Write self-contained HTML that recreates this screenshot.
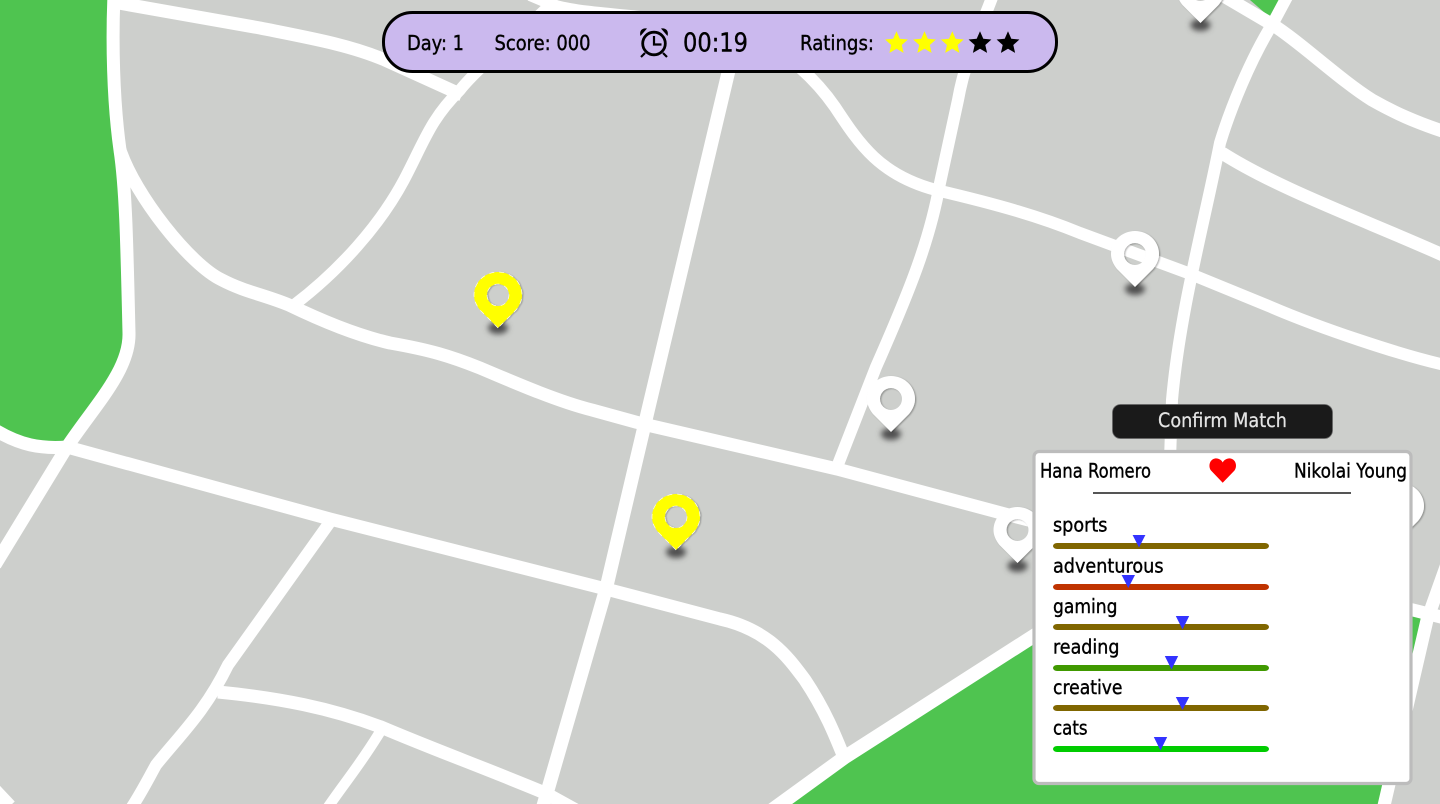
<!DOCTYPE html>
<html>
<head>
<meta charset="utf-8">
<style>
html,body{margin:0;padding:0;background:#cdcfcc;width:1440px;height:804px;overflow:hidden}
svg{display:block}
text{font-family:"DejaVu Sans","Liberation Sans",sans-serif;fill:#000;stroke:#000;stroke-width:.4px}
</style>
</head>
<body>
<svg width="1440" height="804" viewBox="0 0 1440 804" xmlns="http://www.w3.org/2000/svg">
<defs>
<filter id="b" x="-80%" y="-120%" width="260%" height="340%"><feGaussianBlur stdDeviation="3"/></filter>
<filter id="d" x="-20%" y="-20%" width="140%" height="140%"><feDropShadow dx="1.2" dy="0.8" stdDeviation="0.7" flood-color="#000" flood-opacity="0.3"/></filter>
<filter id="dy" x="-20%" y="-20%" width="140%" height="140%"><feDropShadow dx="1.4" dy="0.4" stdDeviation="0.4" flood-color="#000" flood-opacity="0.22"/></filter>
<path id="p" fill-rule="evenodd" d="M0,33 L-18,15 C-22,10 -24,5 -24,0 A24,23 0 0 1 24,0 C24,5 22,10 18,15 Z M-11,0 A11,11 0 1 0 11,0 A11,11 0 1 0 -11,0 Z"/>
<path id="py" fill-rule="evenodd" d="M0,33 L-18,15 C-22,10 -24,5 -24,0 A24,23 0 0 1 24,0 C24,5 22,10 18,15 Z M-11,0 A11,11 0 1 0 11,0 A11,11 0 1 0 -11,0 Z"/>
<polygon id="s" points="0,-12 3.3,-4.5 11.4,-3.7 5.3,1.8 7.1,9.7 0,5.6 -7.1,9.7 -5.3,1.8 -11.4,-3.7 -3.3,-4.5"/>
</defs>

<rect width="1440" height="804" fill="#cdcfcc"/>

<!-- parks -->
<g fill="#4fc450">
<path d="M0,0 L113,0 C111,40 112,100 120,150 C126,190 126,250 129,333 C130,370 100,400 67,447 C40,449 20,445 0,432 Z"/>
<path d="M770,810 L845,757 L1040,630 L1425,612 L1383,810 Z"/>
<path d="M1250,0 L1290,0 L1273,20 Z"/>
</g>

<!-- roads -->
<g fill="none" stroke="#fff" stroke-width="13" stroke-linejoin="round">
<path d="M114,-5 C112,40 113,100 120,150 C126,190 127,250 129,333 C130,370 95,405 67,447 L-5,565"/>
<path d="M-5,430 C20,445 40,449 67,447"/>
<path d="M120,150 C135,195 190,265 222,280 C245,292 265,295 289,305 C320,320 355,335 390,343 C430,350 450,356 480,368 C520,385 560,402 592,410 L643,424 L837,469 L1005,514 L1040,523"/>
<path d="M113,2 L260,28 C310,38 350,45 385,60 L462,95"/>
<path stroke-width="11.5" d="M294,305 C340,270 380,225 404,180 C425,140 430,120 460,90 C480,65 520,35 550,5"/>
<path stroke-width="12" d="M530,-5 L556,6 C600,18 700,15 760,40 C785,52 815,78 835,107 C860,145 880,175 936,190 C1000,205 1041,217 1080,233 L1188,273 L1271,307 C1320,328 1400,355 1445,365"/>
<path stroke-width="12" d="M993,-5 C980,30 965,60 958,100 L940,183 C930,240 910,290 876,367 L837,467"/>
<path stroke-width="12" d="M1288,-5 L1273,23 C1250,60 1230,110 1220,143 C1205,220 1180,310 1172,400 L1170,460"/>
<path stroke-width="13" d="M1222,-5 L1273,25 C1300,42 1340,80 1372,100 C1395,113 1415,122 1445,132"/>
<path stroke-width="13" d="M1222,153 C1280,190 1370,222 1445,256"/>
<path d="M67,447 L330,519 L606,589 L720,619 C770,630 790,660 805,680 C825,710 835,735 845,760"/>
<path stroke-width="13.5" d="M736,40 L650,402 L606,589 L542,810"/>
<path stroke-width="12" d="M330,522 L228,665 C205,712 180,735 156,765 C145,785 140,795 130,810"/>
<path stroke-width="13" d="M218,692 C280,698 330,708 381,727 C430,748 490,770 545,793 L585,815"/>
<path stroke-width="10.5" d="M380,732 C360,765 345,782 326,810"/>
<path d="M-5,790 L10,806"/>
<path stroke-width="14" d="M772,810 L845,757 L1040,632"/>
<path stroke-width="13" d="M1452,550 L1427,620 L1383,810"/>
<path stroke-width="13" d="M1405,608 L1445,618"/>
</g>

<!-- pin shadows -->
<g fill="#505050" filter="url(#b)">
<ellipse cx="1200.5" cy="25" rx="10" ry="6"/>
<ellipse cx="1135" cy="289" rx="10" ry="6"/>
<ellipse cx="891" cy="434" rx="10" ry="6"/>
<ellipse cx="1017.5" cy="566" rx="10" ry="6"/>
<ellipse cx="498" cy="328" rx="10" ry="6"/>
<ellipse cx="676" cy="552" rx="10" ry="6"/>
</g>

<!-- white pins -->
<g fill="#fff" filter="url(#d)">
<use href="#p" transform="translate(1200.5,-10)"/>
<use href="#p" transform="translate(1135,254)"/>
<use href="#p" transform="translate(891,399)"/>
<use href="#p" transform="translate(1017.5,530)"/>
<use href="#p" transform="translate(1400,506)"/>
</g>

<!-- yellow pins -->
<g fill="#ffff00" filter="url(#dy)" stroke="#fff" stroke-width="0.6" stroke-dasharray="5 5">
<use href="#py" transform="translate(498,295)"/>
<use href="#py" transform="translate(676,517)"/>
</g>

<!-- top bar -->
<rect x="383.5" y="12.5" width="673" height="59" rx="29" ry="29" fill="#cbb9ee" stroke="#000" stroke-width="3"/>
<text x="407" y="50" font-size="20.5" textLength="57" lengthAdjust="spacingAndGlyphs">Day: 1</text>
<text x="494.5" y="50" font-size="20.5" textLength="96" lengthAdjust="spacingAndGlyphs">Score: 000</text>
<text x="683" y="51.5" font-size="26" textLength="65" lengthAdjust="spacingAndGlyphs">00:19</text>
<text x="800" y="50" font-size="20.5" textLength="74" lengthAdjust="spacingAndGlyphs">Ratings:</text>

<!-- alarm icon -->
<g fill="none" stroke="#000" stroke-width="2.8">
<circle cx="654" cy="43.5" r="11.3"/>
<path stroke-width="2.2" d="M654,36 V44.5 H661.5"/>
<path stroke-width="2.2" d="M645,53 L641,57 M663,53 L667,57"/>
</g>
<path fill="#000" d="M640.5,36 C639,31 642,27.5 647,28.5 Z M667.5,36 C669,31 666,27.5 661,28.5 Z"/>

<!-- stars -->
<g fill="#ffff00">
<use href="#s" transform="translate(896.5,43.2)"/>
<use href="#s" transform="translate(924.5,43.2)"/>
<use href="#s" transform="translate(952.3,43.2)"/>
</g>
<g fill="#000">
<use href="#s" transform="translate(980,43.2)"/>
<use href="#s" transform="translate(1008,43.2)"/>
</g>

<!-- confirm button -->
<rect x="1112.5" y="404.5" width="220" height="34" rx="8" fill="#1a1a1a" stroke="#666" stroke-width="0.8"/>
<text x="1158" y="427" font-size="19.5" textLength="129" lengthAdjust="spacingAndGlyphs" style="fill:#e4e4e4;stroke:#e4e4e4;stroke-width:.25px">Confirm Match</text>

<!-- panel -->
<rect x="1034" y="451.5" width="377" height="332" rx="5" fill="#fff" stroke="#bcbcbc" stroke-width="3.2"/>
<text x="1040" y="477.3" font-size="19.2" textLength="111" lengthAdjust="spacingAndGlyphs">Hana Romero</text>
<text x="1294" y="477.3" font-size="19.2" textLength="113" lengthAdjust="spacingAndGlyphs">Nikolai Young</text>
<path fill="#ff0000" d="M1222.7,482.7 L1211,470.5 C1208,466.5 1209.5,459.5 1215,458.5 C1218.5,458 1221.5,460 1222.7,462.5 C1224,460 1227,458 1230.5,458.5 C1236,459.5 1237.5,466.5 1234.5,470.5 Z"/>
<rect x="1093" y="492" width="258" height="2" fill="#555"/>

<g font-size="19.5">
<text x="1053" y="531.7" textLength="54.5" lengthAdjust="spacingAndGlyphs">sports</text>
<text x="1053" y="572.3" textLength="110.5" lengthAdjust="spacingAndGlyphs">adventurous</text>
<text x="1053" y="613" textLength="64.5" lengthAdjust="spacingAndGlyphs">gaming</text>
<text x="1053" y="653.7" textLength="66.5" lengthAdjust="spacingAndGlyphs">reading</text>
<text x="1053" y="694" textLength="69.5" lengthAdjust="spacingAndGlyphs">creative</text>
<text x="1053" y="734.5" textLength="34.5" lengthAdjust="spacingAndGlyphs">cats</text>
</g>

<rect x="1053" y="543" width="216" height="6" rx="4" ry="3" fill="#806600"/>
<rect x="1053" y="584" width="216" height="6" rx="4" ry="3" fill="#bf3300"/>
<rect x="1053" y="624" width="216" height="6" rx="4" ry="3" fill="#806600"/>
<rect x="1053" y="665" width="216" height="6" rx="4" ry="3" fill="#409900"/>
<rect x="1053" y="705" width="216" height="6" rx="4" ry="3" fill="#806600"/>
<rect x="1053" y="746" width="216" height="6" rx="4" ry="3" fill="#00cc00"/>

<g fill="#3333ff">
<polygon points="1132.6,535 1145.4,535 1139,547.5"/>
<polygon points="1121.6,575 1135,575 1128.3,588"/>
<polygon points="1175.8,616 1189.2,616 1182.5,629.5"/>
<polygon points="1164.8,656 1178.2,656 1171.5,669.5"/>
<polygon points="1175.8,697 1189.2,697 1182.5,710"/>
<polygon points="1153.8,737 1167.2,737 1160.5,750.5"/>
</g>
</svg>
</body>
</html>
